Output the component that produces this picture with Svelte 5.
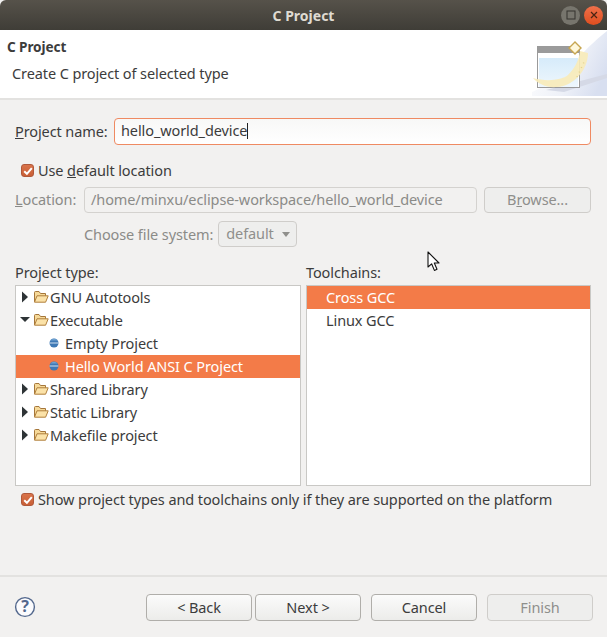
<script lang="ts">
  const projectTypes = [
    { label: 'GNU Autotools', kind: 'closed' },
    { label: 'Executable', kind: 'open' },
    { label: 'Empty Project', kind: 'leaf' },
    { label: 'Hello World ANSI C Project', kind: 'leaf', selected: true },
    { label: 'Shared Library', kind: 'closed' },
    { label: 'Static Library', kind: 'closed' },
    { label: 'Makefile project', kind: 'closed' }
  ];
  const toolchains = [
    { label: 'Cross GCC', selected: true },
    { label: 'Linux GCC', selected: false }
  ];
</script>

{#snippet check()}
  <span class="check">
    <svg width="14" height="14" viewBox="0 0 14 14"><path d="M3.2 7.2 L5.9 9.8 L10.8 4.2" fill="none" stroke="#fff" stroke-width="2"/></svg>
  </span>
{/snippet}

<div class="window">
  <div class="titlebar">
    <span class="title">C Project</span>
    <span class="winbtn max">
      <svg width="10" height="10" viewBox="0 0 10 10"><rect x="1" y="1" width="8" height="8" fill="none" stroke="#34332e" stroke-width="1"/></svg>
    </span>
    <span class="winbtn close">
      <svg width="10" height="10" viewBox="0 0 10 10"><path d="M2 2 L8 8 M8 2 L2 8" stroke="#4a2413" stroke-width="1.2"/></svg>
    </span>
  </div>

  <header class="banner">
    <div class="banner-text">
      <h1>C Project</h1>
      <p>Create C project of selected type</p>
    </div>
    <svg class="wizard" width="75" height="66" viewBox="0 0 75 66">
      <defs>
        <linearGradient id="bg" x1="0" y1="0.2" x2="1" y2="0.6">
          <stop offset="0" stop-color="#fff"/>
          <stop offset="0.6" stop-color="#eef1f8"/>
          <stop offset="1" stop-color="#d8dff0"/>
        </linearGradient>
        <linearGradient id="pane" x1="0" y1="0" x2="0" y2="1">
          <stop offset="0" stop-color="#d6ebfa"/>
          <stop offset="1" stop-color="#eef7fd"/>
        </linearGradient>
      </defs>
      <path d="M0 66 L0 62 C30 50 50 20 75 1 L75 66 Z" fill="url(#bg)"/>
      <path d="M14 60 L75 44 L75 48 L32 62 Z" fill="#d5d9e6"/>
      <rect x="5.5" y="16.5" width="42" height="41" fill="#fff" stroke="#9a9a9a"/>
      <rect x="6" y="17" width="41" height="6" fill="#9b9b9b"/>
      <rect x="7" y="28" width="39" height="29" fill="url(#pane)"/>
      <path d="M1 48 C15 52 30 50 36 45 C43 38 47 30 48 21 L56 23 C56 40 42 56 25 57 C15 58 6 54 1 48 Z" fill="#f8ebb8" opacity="0.9"/>
      <path d="M45 47 L53 30" stroke="#e6d48d" stroke-width="1.5" stroke-dasharray="1 4" fill="none"/>
      <path d="M37 18 L43 12 L49 18 L43 24 Z" fill="#fff8dc" stroke="#c7a651" stroke-width="1.4"/>
    </svg>
  </header>

  <main class="body">
    <div class="name-row">
      <label class="lbl" for="pname"><u>P</u>roject name:</label>
      <div class="input focus" id="pname">hello_world_device<i class="caret"></i></div>
    </div>

    <div class="check-row default-loc">
      {@render check()}
      <span>Use <u>d</u>efault location</span>
    </div>

    <div class="loc-row">
      <span class="lbl dim"><u>L</u>ocation:</span>
      <div class="input disabled">/home/minxu/eclipse-workspace/hello_world_device</div>
      <div class="btn disabled browse">B<u>r</u>owse...</div>
    </div>

    <div class="fs-row">
      <span class="dim">Choose file system:</span>
      <div class="select">default<i class="tri"></i></div>
    </div>

    <div class="lists">
      <section>
        <div class="list-title">Project type:</div>
        <div class="list">
          {#each projectTypes as row}
            <div class="row" class:selected={row.selected}>
              {#if row.kind === 'leaf'}
                <svg class="bullet" width="10" height="10" viewBox="0 0 10 10">
                  <circle cx="5" cy="5" r="4.5" fill="#3f79b5"/>
                  <path d="M0.6 5 H9.4" stroke="#cfe0f0" stroke-width="1"/>
                  <path d="M1.5 2.5 A4.5 4.5 0 0 1 8.5 2.5 Z" fill="#6ea1d0"/>
                </svg>
              {:else}
                <svg class="arrow" width="10" height="12" viewBox="0 0 10 12">
                  {#if row.kind === 'open'}
                    <path d="M0 3 H10 L5 8 Z" fill="#2e3436"/>
                  {:else}
                    <path d="M2 0.5 L8 6 L2 11.5 Z" fill="#2e3436"/>
                  {/if}
                </svg>
                <svg class="folder" width="16" height="13" viewBox="0 0 16 13">
                  <path d="M1.5 12 V2.5 Q1.5 1.5 2.5 1.5 H6 L7.5 3.5 H12.5 V6" fill="#f6d998" stroke="#a5763a"/>
                  <path d="M1.5 12.2 L4 5.8 H15.2 L12.6 12.2 Z" fill="#fbe2a8" stroke="#b07f3c" stroke-linejoin="round"/>
                </svg>
              {/if}
              <span>{row.label}</span>
            </div>
          {/each}
        </div>
      </section>
      <section>
        <div class="list-title">Toolchains:</div>
        <div class="list chains">
          {#each toolchains as row}
            <div class="row" class:selected={row.selected}><span>{row.label}</span></div>
          {/each}
        </div>
      </section>
    </div>

    <div class="check-row platform">
      {@render check()}
      <span>Show project types and toolchains only if they are supported on the platform</span>
    </div>
  </main>

  <footer class="footer">
    <svg class="help" width="22" height="22" viewBox="0 0 22 22">
      <circle cx="11" cy="11" r="9.4" fill="#fbfbfd" stroke="#53688d" stroke-width="1.4"/>
      <text x="11" y="16.2" text-anchor="middle" class="q">?</text>
    </svg>
    <div class="actions">
      <div class="btn back">&lt; Back</div>
      <div class="btn next">Next &gt;</div>
      <div class="btn cancel">Cancel</div>
      <div class="btn disabled finish">Finish</div>
    </div>
  </footer>

  <svg class="pointer" width="15" height="21" viewBox="0 0 15 21">
    <path d="M1 1 V16 L4.6 12.8 L7.4 19.4 L10 18.2 L7.3 12 H12 Z" fill="#fff" stroke="#111" stroke-width="1.1" stroke-linejoin="round"/>
  </svg>
</div>

<style>
  :global(body) {
    margin: 0;
    background: #f2f1f0;
  }

  .window {
    position: relative;
    width: 607px;
    height: 637px;
    overflow: hidden;
    display: flex;
    flex-direction: column;
    background: #f2f1f0;
    color: #3c3c3c;
    font-family: 'Noto Sans', 'Open Sans', sans-serif;
    font-size: 14.5px;
    letter-spacing: -0.1px;
  }

  .titlebar {
    height: 30px;
    flex: none;
    position: relative;
    display: flex;
    align-items: center;
    justify-content: flex-end;
    gap: 4px;
    padding-right: 4px;
    box-sizing: border-box;
    background: linear-gradient(#56524a, #3f3d37);
    border-radius: 6px 6px 0 0;
  }

  .title {
    position: absolute;
    left: 0;
    right: 0;
    text-align: center;
    color: #dfdbd2;
    font-weight: 700;
    font-size: 14px;
    letter-spacing: 0;
  }

  .winbtn {
    width: 19px;
    height: 19px;
    border-radius: 50%;
    display: flex;
    align-items: center;
    justify-content: center;
  }
  .winbtn.max { background: #77756d; }
  .winbtn.close { background: linear-gradient(#f0704a, #df4e1f); }

  .banner {
    height: 68px;
    flex: none;
    display: flex;
    justify-content: space-between;
    align-items: flex-start;
    background: #fff;
    border-bottom: 2px solid #e3e2e0;
  }
  .banner h1 {
    margin: 7px 0 0 7px;
    font-size: 13.6px;
    line-height: 19px;
    font-weight: 700;
    color: #3c3c3c;
  }
  .banner p {
    margin: 8px 0 0 12px;
    line-height: 19px;
  }
  .wizard { display: block; }

  .body {
    flex: 1;
    padding: 18px 16px 0 15px;
    display: flex;
    flex-direction: column;
    min-height: 0;
  }

  .name-row {
    display: flex;
    align-items: center;
    gap: 8px;
  }
  .lbl { white-space: nowrap; margin-bottom: 2px; }
  .name-row .lbl { width: 91px; }

  .input {
    flex: 1;
    box-sizing: border-box;
    height: 27px;
    line-height: 23px;
    padding: 0 6px;
    border-radius: 4px;
    white-space: nowrap;
  }
  .input.focus {
    border: 1px solid #ef8a62;
    background: linear-gradient(#f8f8f7, #fff);
    color: #3c3c3c;
  }
  .caret {
    display: inline-block;
    width: 1px;
    height: 16px;
    background: #222;
    vertical-align: -3px;
  }
  .input.disabled {
    border: 1px solid #d4d2cf;
    background: #f2f1f0;
    color: #8b8b88;
    height: 26px;
    line-height: 22px;
  }

  .check-row {
    display: flex;
    align-items: center;
    gap: 4px;
    padding-left: 6px;
    line-height: 19px;
  }
  .default-loc { margin-top: 16px; }
  .check {
    width: 13px;
    height: 13px;
    border-radius: 3px;
    background: linear-gradient(#d9734a, #c95f36);
    border: 1px solid #b0583a;
    display: flex;
    align-items: center;
    justify-content: center;
    flex: none;
    box-sizing: border-box;
  }
  .check svg { flex: none; }

  .loc-row {
    margin-top: 7px;
    display: flex;
    align-items: center;
    gap: 7px;
  }
  .loc-row .lbl { width: 62px; }
  .dim { color: #8b8b88; }
  .browse { width: 107px; flex: none; }

  .btn {
    box-sizing: border-box;
    height: 27px;
    line-height: 25px;
    text-align: center;
    border: 1px solid #b0aeaa;
    border-radius: 4px;
    background: linear-gradient(#fbfbfb, #ececea);
    color: #3c3c3c;
  }
  .btn.disabled {
    border-color: #cfcdca;
    background: #eeeeed;
    color: #8f8f8c;
  }
  .loc-row .btn { height: 26px; line-height: 23px; }

  .fs-row {
    margin-top: 8px;
    padding-left: 69px;
    display: flex;
    align-items: center;
    gap: 5px;
  }
  .select {
    box-sizing: border-box;
    width: 79px;
    height: 26px;
    line-height: 23px;
    padding-left: 7px;
    border: 1px solid #cfcdca;
    border-radius: 4px;
    background: #eeeeed;
    color: #8f8f8c;
    position: relative;
  }
  .tri {
    position: absolute;
    right: 6px;
    top: 10px;
    width: 0;
    height: 0;
    border-left: 4px solid transparent;
    border-right: 4px solid transparent;
    border-top: 5px solid #8f8f8c;
  }

  .lists {
    margin-top: 16px;
    display: grid;
    grid-template-columns: 286px 285px;
    column-gap: 5px;
  }
  .list-title { line-height: 19px; margin-bottom: 3px; }
  .list {
    box-sizing: border-box;
    height: 201px;
    background: #fff;
    border: 1px solid #c9c8c5;
    overflow: hidden;
  }
  .row {
    box-sizing: border-box;
    height: 23px;
    display: flex;
    align-items: center;
    white-space: nowrap;
    padding: 0 0 2px 4px;
  }
  .chains .row { padding-left: 19px; }
  .row.selected {
    background: #f37b48;
    color: #fff;
  }
  .arrow { flex: none; margin-right: 3px; }
  .folder { flex: none; margin-right: 1px; }
  .bullet { flex: none; margin: 0 6px 0 29px; }

  .platform { margin-top: 4px; padding-left: 6px; }

  .footer {
    flex: none;
    height: 62px;
    box-sizing: border-box;
    border-top: 2px solid #e3e2e0;
    display: flex;
    justify-content: space-between;
    padding: 17px 14px 0 14px;
  }
  .help { margin-top: 2px; }
  .q {
    font-size: 16px;
    font-weight: 700;
    fill: #53688d;
    font-family: 'Noto Sans', sans-serif;
  }
  .actions {
    display: flex;
    margin-top: 0;
  }
  .actions .btn { width: 106px; }
  .next { margin-left: 3px; }
  .cancel { margin-left: 10px; }
  .finish { margin-left: 10px; }

  /* mouse cursor caught in the screenshot */
  .pointer {
    position: absolute;
    left: 427px;
    top: 251px;
  }
</style>
